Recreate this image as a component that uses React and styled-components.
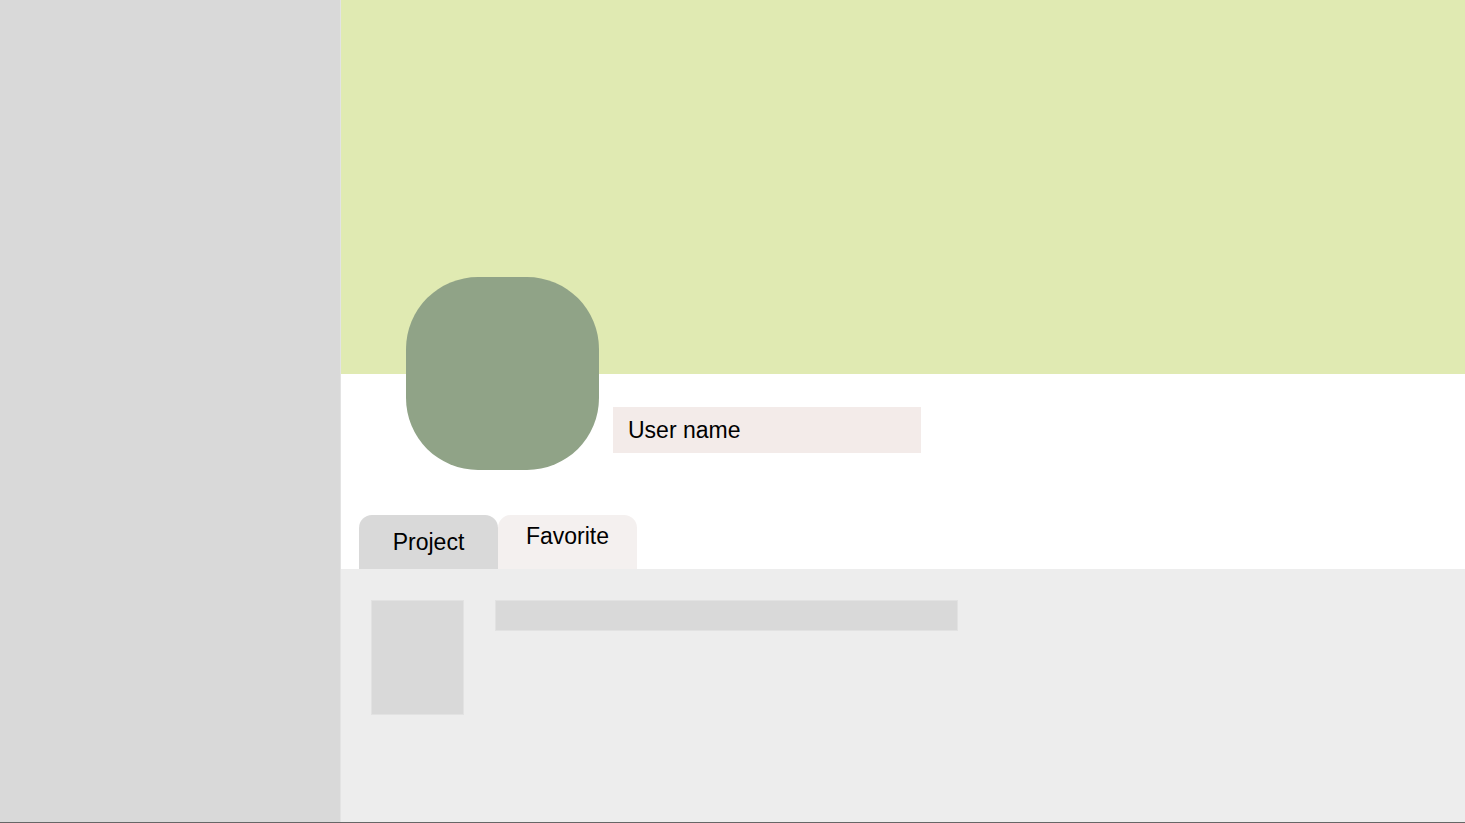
import React from "react";
import styled, { createGlobalStyle } from "styled-components";

const Global = createGlobalStyle`
  html, body { margin: 0; padding: 0; background: #ffffff; }
  body { font-family: "Liberation Sans", Arial, sans-serif; }
  * { box-sizing: border-box; }
`;

const Page = styled.div`
  display: flex;
  width: 1465px;
  height: 823px;
  border-bottom: 1px solid #666666;
  overflow: hidden;
`;

const Sidebar = styled.aside`
  width: 341px;
  flex-shrink: 0;
  background: #d9d9d9;
  border-right: 1px solid #e3e3e3;
`;

const Main = styled.main`
  flex: 1;
  display: flex;
  flex-direction: column;
  background: #ffffff;
`;

const Banner = styled.div`
  height: 374px;
  background: #e0eab2;
  flex-shrink: 0;
`;

const ProfileRow = styled.div`
  display: flex;
  align-items: flex-start;
  gap: 14px;
  padding-left: 65px;
  margin-top: -97px;
`;

const Avatar = styled.div`
  width: 193px;
  height: 193px;
  border-radius: 72px;
  background: #90a387;
  flex-shrink: 0;
`;

const UserName = styled.div`
  margin-top: 130px;
  width: 308px;
  height: 46px;
  background: #f3ebe9;
  display: flex;
  align-items: center;
  padding-left: 15px;
  font-size: 23px;
  color: #000;
`;

const Tabs = styled.div`
  display: flex;
  padding-left: 18px;
  margin-top: 45px;
`;

const Tab = styled.div`
  width: 139px;
  height: 54px;
  border-radius: 13px 13px 0 0;
  background: ${(p) => (p.$active ? "#d9d9d9" : "#f4f0ef")};
  display: flex;
  justify-content: center;
  align-items: ${(p) => (p.$active ? "center" : "flex-start")};
  padding-top: ${(p) => (p.$active ? "0" : "8px")};
  font-size: 23px;
  color: #000;
`;

const Content = styled.section`
  flex: 1;
  background: #ededed;
  display: flex;
  align-items: flex-start;
  gap: 31px;
  padding: 31px 0 0 30px;
`;

const Thumb = styled.div`
  width: 93px;
  height: 115px;
  background: #d9d9d9;
  border: 1px solid #e2e2e2;
`;

const Bar = styled.div`
  width: 463px;
  height: 31px;
  background: #d9d9d9;
  border: 1px solid #e2e2e2;
`;

export default function App() {
  return (
    <>
      <Global />
      <Page>
        <Sidebar />
        <Main>
          <Banner />
          <ProfileRow>
            <Avatar />
            <UserName>User name</UserName>
          </ProfileRow>
          <Tabs>
            <Tab $active>Project</Tab>
            <Tab>Favorite</Tab>
          </Tabs>
          <Content>
            <Thumb />
            <Bar />
          </Content>
        </Main>
      </Page>
    </>
  );
}
